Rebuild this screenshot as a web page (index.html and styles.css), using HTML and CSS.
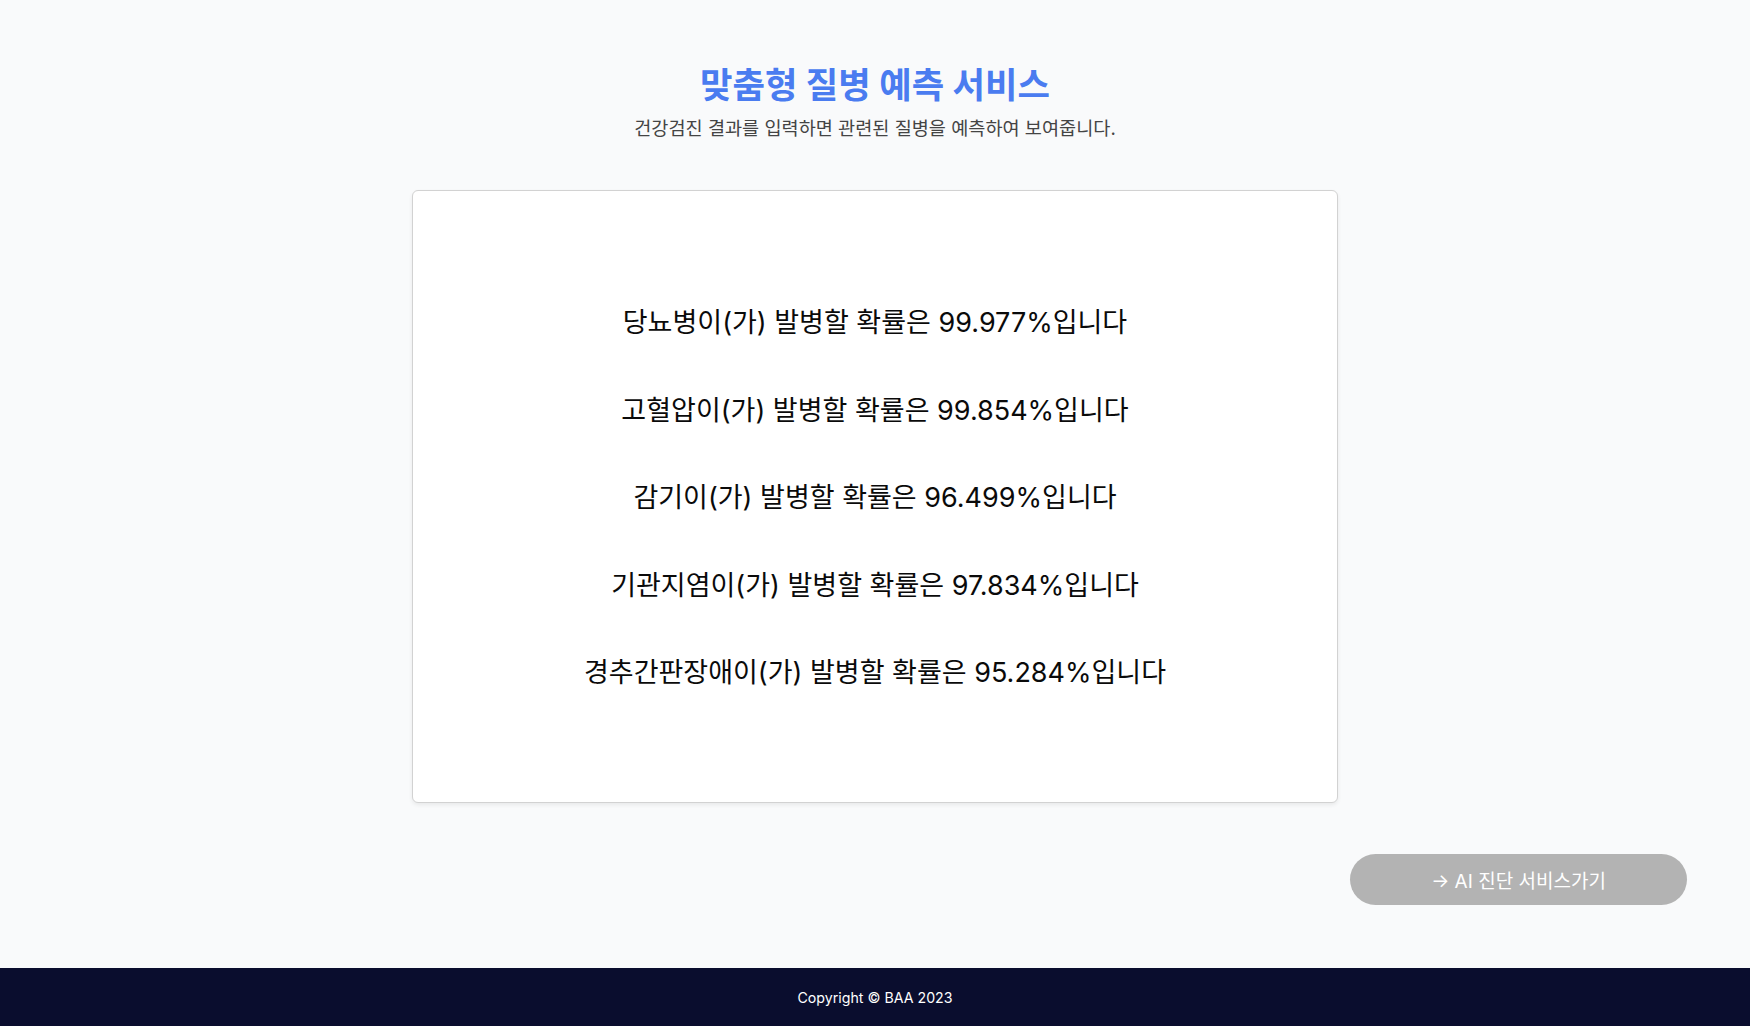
FILE: index.html
```html
<!DOCTYPE html>
<html lang="ko">
<head>
<meta charset="utf-8">
<title>맞춤형 질병 예측 서비스</title>
<link rel="stylesheet" href="styles.css">
</head>
<body>
<main class="page">
  <header class="intro">
    <h1 class="title">맞춤형 질병 예측 서비스</h1>
    <p class="subtitle">건강검진 결과를 입력하면 관련된 질병을 예측하여 보여줍니다.</p>
  </header>
  <section class="card">
    <p class="result">당뇨병이(가) 발병할 확률은 99.977%입니다</p>
    <p class="result">고혈압이(가) 발병할 확률은 99.854%입니다</p>
    <p class="result">감기이(가) 발병할 확률은 96.499%입니다</p>
    <p class="result">기관지염이(가) 발병할 확률은 97.834%입니다</p>
    <p class="result">경추간판장애이(가) 발병할 확률은 95.284%입니다</p>
  </section>
  <div class="actions">
    <a class="btn" href="#">→ AI 진단 서비스가기</a>
  </div>
</main>
<footer class="footer">Copyright © BAA 2023</footer>
</body>
</html>
```
FILE: styles.css
```css
* { box-sizing: border-box; }
html, body { margin: 0; padding: 0; }
body {
  background: #f9fafb;
  font-family: Inter, "Noto Sans CJK KR", sans-serif;
  color: #111;
}
.page {
  display: flex;
  flex-direction: column;
  align-items: center;
  padding-top: 65px;
}
.intro { text-align: center; }
.title {
  margin: 0;
  font-size: 35.3px;
  line-height: 42px;
  font-weight: 700;
  color: #4a7cf0;
}
.subtitle {
  margin: 9px 0 0;
  font-size: 18.6px;
  line-height: 24px;
  color: #444;
}
.card {
  margin-top: 50px;
  width: 926px;
  height: 613px;
  padding-top: 3px;
  background: #fff;
  border: 1px solid #d2d2d2;
  border-radius: 6px;
  box-shadow: 0 2px 4px rgba(0,0,0,0.07);
  display: flex;
  flex-direction: column;
  align-items: center;
  justify-content: center;
  gap: 51.5px;
}
.result {
  margin: 0;
  font-size: 27px;
  line-height: 36px;
  font-weight: 400;
  color: #0a0a0a;
}
.actions {
  align-self: stretch;
  display: flex;
  justify-content: flex-end;
  padding-right: 63px;
  margin-top: 51px;
  margin-bottom: 63px;
}
.btn {
  width: 337px;
  height: 51px;
  border-radius: 26px;
  background: #b3b3b3;
  color: #fff;
  text-decoration: none;
  font-size: 19px;
  font-weight: 400;
  display: flex;
  align-items: center;
  justify-content: center;
}
.footer {
  height: 58px;
  background: #0a0d2e;
  color: #fff;
  font-size: 14.2px;
  display: flex;
  align-items: center;
  justify-content: center;
}
```
